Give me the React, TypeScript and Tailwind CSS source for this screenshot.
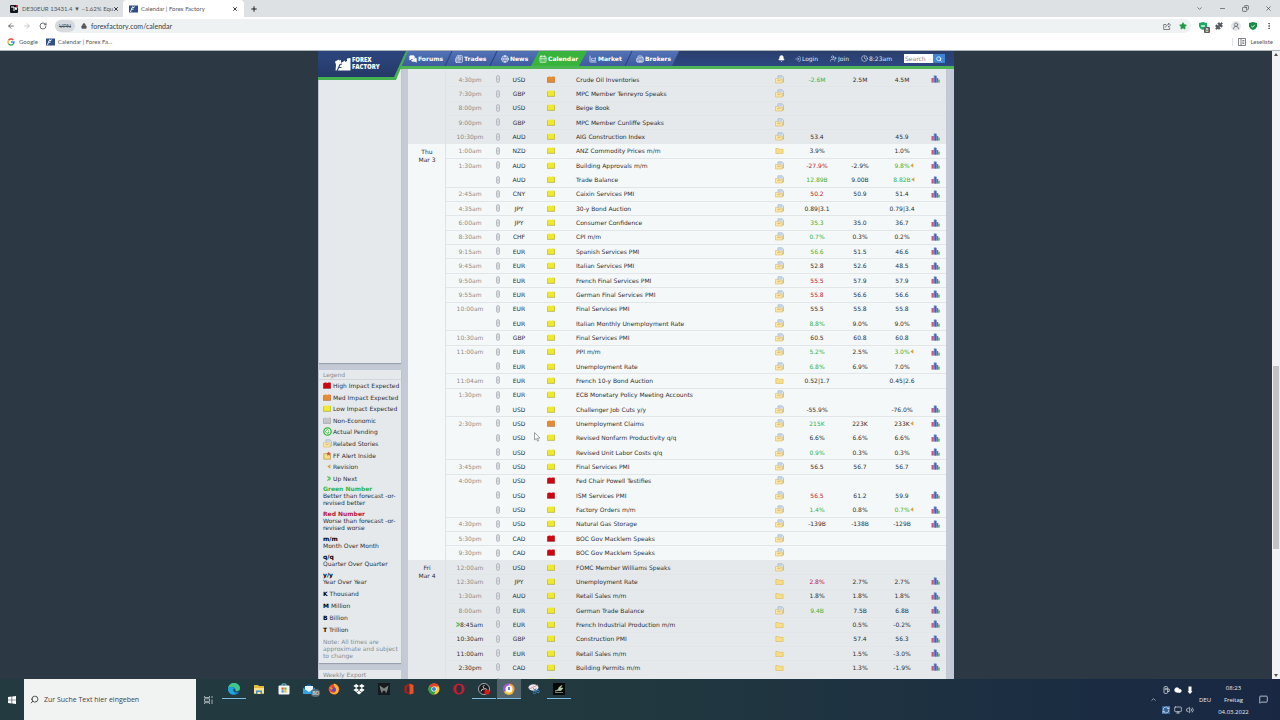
import React from "react";
import {
  ArrowLeft, ArrowRight, RotateCw, Lock, X, Plus, ChevronDown, ChevronUp, Minus, Copy, Share, Star,
  Puzzle, UserRound, MoreVertical, Search, Bell, LogIn, UserPlus, Clock, MessagesSquare,
  CalendarDays, Globe, Building2, ChartArea, Newspaper, Cloud, Volume2, MessageSquare,
  Monitor, RefreshCw,
} from "lucide-react";

type Tone = "g" | "r" | "";
type Row = {
  time: string;
  cur: string;
  imp: "y" | "o" | "r";
  name: string;
  stories?: boolean;
  actual?: string;
  tone?: Tone;
  forecast?: string;
  prev?: string;
  prevTone?: Tone;
  revised?: boolean;
  chart?: boolean;
  upcoming?: boolean;
};

const row = (
  time: string, cur: string, imp: Row["imp"], name: string,
  actual = "", tone: Tone = "", forecast = "", prev = "", extra: Partial<Row> = {},
): Row => ({ time, cur, imp, name, actual, tone, forecast, prev, stories: true, chart: prev !== "", ...extra });

const folderOnly = { stories: false };
const noChart = { chart: false };

const days: { label: string[]; light: boolean; rows: Row[] }[] = [
  {
    label: [],
    light: false,
    rows: [
      row("4:30pm", "USD", "o", "Crude Oil Inventories", "-2.6M", "g", "2.5M", "4.5M"),
      row("7:30pm", "GBP", "y", "MPC Member Tenreyro Speaks"),
      row("8:00pm", "USD", "y", "Beige Book"),
      row("9:00pm", "GBP", "y", "MPC Member Cunliffe Speaks"),
      row("10:30pm", "AUD", "y", "AIG Construction Index", "53.4", "", "", "45.9"),
    ],
  },
  {
    label: ["Thu", "Mar 3"],
    light: true,
    rows: [
      row("1:00am", "NZD", "y", "ANZ Commodity Prices m/m", "3.9%", "", "", "1.0%", folderOnly),
      row("1:30am", "AUD", "y", "Building Approvals m/m", "-27.9%", "r", "-2.9%", "9.8%", { prevTone: "g", revised: true }),
      row("", "AUD", "y", "Trade Balance", "12.89B", "g", "9.00B", "8.82B", { prevTone: "g", revised: true }),
      row("2:45am", "CNY", "y", "Caixin Services PMI", "50.2", "r", "50.9", "51.4"),
      row("4:35am", "JPY", "y", "30-y Bond Auction", "0.89|3.1", "", "", "0.79|3.4", noChart),
      row("6:00am", "JPY", "y", "Consumer Confidence", "35.3", "g", "35.0", "36.7"),
      row("8:30am", "CHF", "y", "CPI m/m", "0.7%", "g", "0.3%", "0.2%"),
      row("9:15am", "EUR", "y", "Spanish Services PMI", "56.6", "g", "51.5", "46.6"),
      row("9:45am", "EUR", "y", "Italian Services PMI", "52.8", "", "52.6", "48.5"),
      row("9:50am", "EUR", "y", "French Final Services PMI", "55.5", "r", "57.9", "57.9"),
      row("9:55am", "EUR", "y", "German Final Services PMI", "55.8", "r", "56.6", "56.6"),
      row("10:00am", "EUR", "y", "Final Services PMI", "55.5", "", "55.8", "55.8"),
      row("", "EUR", "y", "Italian Monthly Unemployment Rate", "8.8%", "g", "9.0%", "9.0%"),
      row("10:30am", "GBP", "y", "Final Services PMI", "60.5", "", "60.8", "60.8"),
      row("11:00am", "EUR", "y", "PPI m/m", "5.2%", "g", "2.5%", "3.0%", { prevTone: "g", revised: true }),
      row("", "EUR", "y", "Unemployment Rate", "6.8%", "g", "6.9%", "7.0%"),
      row("11:04am", "EUR", "y", "French 10-y Bond Auction", "0.52|1.7", "", "", "0.45|2.6", { stories: false, chart: false }),
      row("1:30pm", "EUR", "y", "ECB Monetary Policy Meeting Accounts"),
      row("", "USD", "y", "Challenger Job Cuts y/y", "-55.9%", "", "", "-76.0%"),
      row("2:30pm", "USD", "o", "Unemployment Claims", "215K", "g", "223K", "233K", { revised: true }),
      row("", "USD", "y", "Revised Nonfarm Productivity q/q", "6.6%", "", "6.6%", "6.6%"),
      row("", "USD", "y", "Revised Unit Labor Costs q/q", "0.9%", "g", "0.3%", "0.3%"),
      row("3:45pm", "USD", "y", "Final Services PMI", "56.5", "", "56.7", "56.7"),
      row("4:00pm", "USD", "r", "Fed Chair Powell Testifies"),
      row("", "USD", "r", "ISM Services PMI", "56.5", "r", "61.2", "59.9"),
      row("", "USD", "y", "Factory Orders m/m", "1.4%", "g", "0.8%", "0.7%", { prevTone: "g", revised: true }),
      row("4:30pm", "USD", "y", "Natural Gas Storage", "-139B", "", "-138B", "-129B"),
      row("5:30pm", "CAD", "r", "BOC Gov Macklem Speaks"),
      row("9:30pm", "CAD", "r", "BOC Gov Macklem Speaks"),
    ],
  },
  {
    label: ["Fri", "Mar 4"],
    light: false,
    rows: [
      row("12:00am", "USD", "y", "FOMC Member Williams Speaks"),
      row("12:30am", "JPY", "y", "Unemployment Rate", "2.8%", "r", "2.7%", "2.7%", folderOnly),
      row("1:30am", "AUD", "y", "Retail Sales m/m", "1.8%", "", "1.8%", "1.8%", folderOnly),
      row("8:00am", "EUR", "y", "German Trade Balance", "9.4B", "g", "7.5B", "6.8B"),
      row("8:45am", "EUR", "y", "French Industrial Production m/m", "", "", "0.5%", "-0.2%", { stories: false, upcoming: true }),
      row("10:30am", "GBP", "y", "Construction PMI", "", "", "57.4", "56.3", { stories: false, upcoming: true }),
      row("11:00am", "EUR", "y", "Retail Sales m/m", "", "", "1.5%", "-3.0%", { stories: false, upcoming: true }),
      row("2:30pm", "CAD", "y", "Building Permits m/m", "", "", "1.3%", "-1.9%", { stories: false, upcoming: true }),
      row("", "", "y", "", "", "", "", "", { stories: false, upcoming: true }),
    ],
  },
];

const toneClass = { g: "text-[#35b23c]", r: "text-[#b5203c]", "": "" };

const impactColors = {
  y: ["#f0e92c", "#b3a92a"],
  o: ["#e98a2e", "#b0622a"],
  r: ["#d2040f", "#8f0a12"],
  n: ["#c4c6ca", "#94979c"],
};

function Impact({ kind }: { kind: "y" | "o" | "r" | "n" }) {
  const [fill, edge] = impactColors[kind];
  return (
    <svg viewBox="0 0 8 7" className="block h-[7px] w-2">
      <path d="M.5 1.3 L2 .6 H3.3 L4 1.2 L5 .6 H7.5 V6 H.5Z" fill={fill} />
      <path d="M.3 1.3V6.4H7.7V1" fill="none" stroke={edge} strokeWidth=".7" />
    </svg>
  );
}

function Folder({ stories }: { stories?: boolean }) {
  return (
    <svg viewBox="0 0 9 9" className="mx-auto block size-[9px]">
      {stories && (
        <>
          <path d="M3 .8h4L8.600 2.300V7H3z" fill="#dbe6f0" stroke="#8ea4ba" strokeWidth=".6" />
          <path d="M4 2.200h3" stroke="#9bb0c6" strokeWidth=".5" />
        </>
      )}
      <path d={stories ? "M.5 3.400h2l.8.6h4v4H.5z" : "M.8 2.500h2.500l.8.8h4v4.200H.8z"} fill={stories ? "#fbe7a6" : "#f7df84"} stroke="#dcb75c" strokeWidth=".6" />
      {stories && <path d="M2.200 5.600h3.400" stroke="#cfa550" strokeWidth=".6" />}
    </svg>
  );
}

function ChartIcon() {
  return (
    <svg viewBox="0 0 9 8" className="mr-[6px] ml-auto block h-2 w-[9px]">
      <rect x=".5" y="3" width="2.3" height="4.6" fill="#c9577e" />
      <rect x="2.8" y=".5" width="2.6" height="7.1" fill="#5f7fcc" />
      <rect x="4.4" y="1.2" width="1" height="6.4" fill="#35549f" />
      <rect x="5.6" y="3" width="1.6" height="4.6" fill="#7a68ad" />
      <rect x="7.2" y="4.6" width="1.5" height="3" fill="#4fae62" />
    </svg>
  );
}

function FlagIcon() {
  return (
    <svg viewBox="0 0 9 8" className="block h-2 w-[9px]">
      <rect y=".5" width="9" height="7" fill="#2f4f87" />
      <path d="M1.5 7 3 2.500l1-.8v1.200l1.800-1.200M2.500 4.200h2" stroke="#fff" strokeWidth=".9" fill="none" />
    </svg>
  );
}

function RevisionMark() {
  return (
    <svg viewBox="0 0 4 5" className="block h-[5px] w-1">
      <path d="M.3 2.500 3.300.3v4.400z" fill="#d9a23c" />
    </svg>
  );
}

function NextMark() {
  return (
    <svg viewBox="0 0 4 5" className="block h-[5px] w-1">
      <path d="M.3.400 2.200 2.500.3 4.600M2 .400 3.600 2.500 2 4.600" fill="none" stroke="#35b23c" strokeWidth="1" />
    </svg>
  );
}

function LinkIcon() {
  return (
    <svg viewBox="0 0 4 8" className="mx-auto block h-2 w-1">
      <rect x=".5" y=".6" width="3" height="6.800" rx="1.500" fill="#e4e7ea" stroke="#a9aeb6" strokeWidth=".8" />
      <path d="M2 2.500v3" stroke="#a9aeb6" strokeWidth=".7" />
    </svg>
  );
}

function EventTable() {
  return (
    <table className="h-[617px] w-full table-fixed border-collapse text-center leading-[7px]">
      <colgroup>
        <col className="w-[38px]" />
        <col className="w-12" />
        <col className="w-[7px]" />
        <col className="w-9" />
        <col className="w-7" />
        <col />
        <col className="w-7" />
        <col className="w-12" />
        <col className="w-[38px]" />
        <col className="w-[46px]" />
        <col className="w-[21px]" />
      </colgroup>
      {days.map((day, d) => (
        <tbody key={d} className={day.light ? "bg-[#f5f8f9]" : "bg-[#e5e9ec]"}>
          {day.rows.map((r, i) => (
            <tr key={i} className={r.time && i > 0 ? "[&>td]:shadow-[inset_0_1px_0_#e3e6e9]" : ""}>
              {i === 0 && (
                <td rowSpan={day.rows.length} className="p-0 pt-1 align-top leading-2 shadow-[inset_-1px_0_0_#dfe3e7]">
                  {day.label.map((l) => <div key={l}>{l}</div>)}
                </td>
              )}
              <td className={r.upcoming ? "p-0" : "p-0 text-[#888c91]"}>
                {r.time === "8:45am"
                  ? <span className="flex items-center justify-center pr-px"><NextMark />{r.time}</span>
                  : r.time}
              </td>
              <td className="p-0"><LinkIcon /></td>
              <td className="p-0">{r.cur}</td>
              <td className="p-0 pl-[10px]"><Impact kind={r.imp} /></td>
              <td className="p-0 pl-[11px] text-left whitespace-nowrap">{r.name}</td>
              <td className="p-0"><Folder stories={r.stories} /></td>
              <td className={"p-0 " + toneClass[r.tone ?? ""]}>{r.actual}</td>
              <td className="p-0">{r.forecast}</td>
              <td className={"p-0 " + toneClass[r.prevTone ?? ""]}>
                {r.revised
                  ? <span className="flex items-center justify-center pl-1">{r.prev}<RevisionMark /></span>
                  : r.prev}
              </td>
              <td className="p-0">{r.chart && <ChartIcon />}</td>
            </tr>
          ))}
        </tbody>
      ))}
    </table>
  );
}

const legend: { icon: React.ReactNode; text: string }[] = [
  { icon: <Impact kind="r" />, text: "High Impact Expected" },
  { icon: <Impact kind="o" />, text: "Med Impact Expected" },
  { icon: <Impact kind="y" />, text: "Low Impact Expected" },
  { icon: <Impact kind="n" />, text: "Non-Economic" },
  {
    icon: (
      <svg viewBox="0 0 9 9" className="size-[9px]">
        <circle cx="4.5" cy="4.5" r="3.7" fill="#fff" stroke="#32b53b" strokeWidth="1.3" />
        <path d="M5.8 3.3A1.8 1.8 0 1 0 6.2 5H4.8" fill="none" stroke="#32b53b" strokeWidth=".9" />
      </svg>
    ),
    text: "Actual Pending",
  },
  { icon: <Folder stories />, text: "Related Stories" },
  {
    icon: (
      <svg viewBox="0 0 9 9" className="size-[9px]">
        <path d="M.8 2.6h2.5l.8.8h3.4v4.8H.8z" fill="#f7dc8c" stroke="#c9953a" strokeWidth=".7" />
        <path d="m5.6.4.8 1.4 1.7.2-1.2 1.2.3 1.6-1.6-.8-1.5.8.3-1.6L3.200 2l1.700-.2z" fill="#cf5c3c" />
      </svg>
    ),
    text: "FF Alert Inside",
  },
  { icon: <span className="pl-1"><RevisionMark /></span>, text: "Revision" },
  { icon: <span className="pl-1"><NextMark /></span>, text: "Up Next" },
];

function Sidebar() {
  return (
    <aside className="flex w-[82px] shrink-0 flex-col gap-[7px]">
      <div className="h-[294px] bg-[#e5e9ec] shadow-[0_1px_1px_#9aa1ae]" />
      <section className="bg-[#e5e9ec] px-1 pb-1 leading-[7px] shadow-[0_1px_1px_#9aa1ae]">
        <h2 className="-mx-1 border-b border-[#d3d7dc] px-1 py-px text-[#888c91]">Legend</h2>
        <ul className="grid h-[104px] grid-rows-9">
          {legend.map((l) => (
            <li key={l.text} className="flex items-center gap-px whitespace-nowrap">
              <span className="flex w-[9px] shrink-0">{l.icon}</span>
              {l.text}
            </li>
          ))}
        </ul>
        <dl className="mt-px flex flex-col gap-1 whitespace-nowrap">
          <div>
            <dt className="font-bold text-[#35b23c]">Green Number</dt>
            <dd>Better than forecast -or-<br />revised better</dd>
          </div>
          <div>
            <dt className="font-bold text-[#b5203c]">Red Number</dt>
            <dd>Worse than forecast -or-<br />revised worse</dd>
          </div>
          <div><dt className="font-bold text-black">m/m</dt><dd>Month Over Month</dd></div>
          <div><dt className="font-bold text-black">q/q</dt><dd>Quarter Over Quarter</dd></div>
          <div><dt className="font-bold text-black">y/y</dt><dd>Year Over Year</dd></div>
        </dl>
        <ul className="mt-[5px] flex flex-col gap-[5px]">
          <li><b className="text-black">K</b> Thousand</li>
          <li><b className="text-black">M</b> Million</li>
          <li><b className="text-black">B</b> Billion</li>
          <li><b className="text-black">T</b> Trillion</li>
        </ul>
        <p className="mt-[5px] whitespace-nowrap text-[#888c91]">
          Note: All times are<br />approximate and subject<br />to change
        </p>
      </section>
      <section className="h-5 bg-[#e5e9ec] px-1 py-px leading-2 text-[#888c91]">
        <h2>Weekly Export</h2>
      </section>
    </aside>
  );
}

function Divider() {
  return <span className="h-full w-px shrink-0 -skew-x-[25deg] bg-[#263f7c]" />;
}

const navLink = "flex h-full items-center gap-px whitespace-nowrap";

function SiteHeader() {
  return (
    <header className="relative z-10 flex h-[18px] items-start border-b-3 border-[#4cb556] bg-linear-to-b from-[#2a3f6b] to-[#2c4782] text-[6px] leading-2 text-[#dfe6f5]">
      <a
        href="#home"
        className="relative z-10 -mr-2 h-[29px] w-[90px] shrink-0 bg-[#45b050] [clip-path:polygon(0_0,100%_0,78px_100%,0_100%)]"
        aria-label="Forex Factory"
      >
        <span className="flex h-[26px] w-[88px] items-center gap-px bg-linear-to-b from-[#2c467e] to-[#243a68] pl-4 text-white [clip-path:polygon(0_0,100%_0,76px_100%,0_100%)]">
          <svg viewBox="0 0 17 15" className="h-[15px] w-[17px] shrink-0">
            <path d="M1 4.500 5 2.500l.5 1L7 3v3l4-2.500V5l2-1V1.500l3.500-.5v12.500H1.500L2 8z" fill="#fff" />
            <path d="M3 14 6 7.500 8 7M4.500 10.500h3" stroke="#2c467e" strokeWidth="1.200" fill="none" />
          </svg>
          <span className="flex flex-col font-['Open_Sans',sans-serif] text-[6px] font-extrabold">
            <span className="leading-[7px]">FOREX</span>
            <span className="leading-[7px]">FACTORY</span>
          </span>
        </span>
      </a>
      <nav className="flex h-full w-[279px] shrink-0 items-center bg-linear-to-b from-[#5272b8] to-[#3e5c9f] font-bold text-white [clip-path:polygon(0_0,100%_0,calc(100%-7px)_100%,0_100%)]">
        <a href="#forums" className={navLink + " w-[48px] pl-[9px]"}><MessagesSquare className="size-2 fill-white" />Forums</a>
        <Divider />
        <a href="#trades" className={navLink + " w-[44px] pl-[6px]"}><Newspaper className="size-2" />Trades</a>
        <Divider />
        <a href="#news" className={navLink + " w-[37px] pl-[7px]"}><Globe className="size-2" />News</a>
        <a href="#calendar" className={navLink + " w-[56px] bg-[#38b43c] pl-[8px] [clip-path:polygon(8px_0,100%_0,calc(100%-8px)_100%,0_100%)]"}>
          <CalendarDays className="size-2" />Calendar
        </a>
        <a href="#market" className={navLink + " w-[41px] pl-[2px]"}><ChartArea className="size-2" />Market</a>
        <Divider />
        <a href="#brokers" className={navLink + " pl-[7px]"}><Building2 className="size-2" />Brokers</a>
      </nav>
      <div className="ml-auto flex h-full shrink-0 items-center pr-[9px] whitespace-nowrap">
        <button aria-label="Alerts" className="mr-[10px]"><Bell className="size-[7px] fill-white text-white" /></button>
        <a href="#login" className="mr-3 flex items-center gap-px"><LogIn className="size-[6px]" />Login</a>
        <a href="#join" className="mr-3 flex items-center gap-px"><UserPlus className="size-[7px]" />Join</a>
        <span className="mr-3 flex items-center gap-px"><Clock className="size-[7px]" />8:23am</span>
        <input aria-label="Search site" placeholder="Search" className="h-[9px] w-[29px] bg-white px-px text-[6px] leading-2 placeholder:text-[#888]" />
        <button aria-label="Search" className="flex h-[9px] w-3 items-center justify-center bg-[#3d86d6] text-white"><Search className="size-[6px]" strokeWidth={3} /></button>
      </div>
    </header>
  );
}

function BrowserChrome() {
  return (
    <div className="shrink-0 border-b border-[#aeb4bb] bg-white font-[Lato,sans-serif] text-[6px] leading-2 text-[#54585d]">
      <div className="flex h-[17px] items-center bg-[#dde1e4]">
        <div className="flex w-[123px] items-center pr-1 pl-[10px]">
          <svg viewBox="0 0 8 8" className="mr-1 size-2 shrink-0">
            <rect width="8" height="8" rx="1" fill="#15171c" />
            <path d="M1 2h3v4M5 2l1 3 1.200-3" stroke="#fff" fill="none" />
            <circle cx="7" cy="1" r="1" fill="#ef304f" />
          </svg>
          <span className="whitespace-nowrap">DE30EUR 13431.4 ▼ −1.62% Equ</span>
          <button aria-label="Close first tab" className="ml-auto"><X className="size-[6px] text-black" strokeWidth={3} /></button>
        </div>
        <div className="flex h-full w-[121px] items-center rounded-t-[4px] bg-white px-[6px]">
          <FlagIcon />
          <span className="ml-[3px] whitespace-nowrap">Calendar | Forex Factory</span>
          <button aria-label="Close second tab" className="ml-auto"><X className="size-[6px] text-black" strokeWidth={3} /></button>
        </div>
        <button aria-label="New tab" className="ml-[6px]"><Plus className="size-2 text-black" strokeWidth={2.5} /></button>
        <div className="ml-auto flex items-center gap-4 pr-2 text-[#333]">
          <button aria-label="Tab search"><ChevronDown className="size-[7px]" /></button>
          <button aria-label="Minimise"><Minus className="size-[7px]" /></button>
          <button aria-label="Restore"><Copy className="size-[7px] -scale-x-100" /></button>
          <button aria-label="Close window"><X className="size-[7px]" /></button>
        </div>
      </div>
      <div className="flex h-[18px] items-center">
        <button aria-label="Back" className="ml-[7px]"><ArrowLeft className="size-2" strokeWidth={2.5} /></button>
        <button aria-label="Forward" className="ml-2"><ArrowRight className="size-2 text-[#b0b4b8]" /></button>
        <button aria-label="Reload" className="ml-2"><RotateCw className="size-2" strokeWidth={2.5} /></button>
        <div className="ml-2 flex h-[14px] flex-1 items-center rounded-full bg-[#eff2f3] pr-1">
          <span className="flex h-3 w-5 items-center justify-center rounded-full bg-[#d6dade] text-[6px] line-through">VPN</span>
          <Lock className="ml-[6px] size-[6px] fill-[#54585d]" />
          <input aria-label="Address" defaultValue="forexfactory.com/calendar" className="ml-1 flex-1 text-[7px] leading-[10px] text-[#3c4043]" />
          <button aria-label="Share page">
            <svg viewBox="0 0 8 8" className="size-2" fill="none" stroke="#70757a" strokeWidth=".9"><path d="M3 2.500H.7v5h6V5.500M2.500 5.500q.3-3 3-3V1L7.600 3.200 5.500 5.200V3.800" /></svg>
          </button>
          <button aria-label="Bookmark" className="ml-2"><Star className="size-2 fill-[#1d9b45] text-[#1d9b45]" /></button>
        </div>
        <div className="ml-2 flex items-center gap-2 pr-[7px]">
          <span className="relative">
            <svg viewBox="0 0 8 8" className="size-2"><path d="M4 0 8 1v3.500Q7 7 4 8 1 7 0 4.500V1z" fill="#1cab62" /><path d="M2 4h4" stroke="#d4f5df" strokeWidth="1.500" /></svg>
            <span className="absolute -right-[3px] -bottom-[3px] flex size-[6px] items-center justify-center rounded-[1px] bg-[#5a5e62] text-[5px] leading-none text-white">8</span>
          </span>
          <Puzzle className="size-2 fill-[#54585d]" />
          <span className="rounded-full bg-[#e4e7e9] p-px"><UserRound className="size-2" /></span>
          <svg viewBox="0 0 8 8" className="size-2"><path d="M4 0 8 1v3.500Q7 7 4 8 1 7 0 4.500V1z" fill="#158a43" /><path d="m2.300 4 1.200 1.200 2.300-2.400" stroke="#fff" fill="none" /></svg>
          <MoreVertical className="size-2" strokeWidth={3} />
        </div>
      </div>
      <div className="flex h-[15px] items-center pr-[7px] pb-px">
        <a href="#google" className="ml-[7px] flex items-center gap-1">
          <svg viewBox="0 0 8 8" className="size-2">
            <g fill="none" strokeWidth="1.400">
              <path d="M6.300 2A3 3 0 0 0 1.400 2.500" stroke="#ea4335" />
              <path d="M1.400 2.500A3 3 0 0 0 1.400 5.500" stroke="#fbbc05" />
              <path d="M1.400 5.500A3 3 0 0 0 6 6.200" stroke="#34a853" />
              <path d="M6 6.200A3 3 0 0 0 7 4H4" stroke="#4285f4" />
            </g>
          </svg>
          Google
        </a>
        <a href="#calendar" className="ml-2 flex items-center gap-[3px]"><FlagIcon />Calendar | Forex Fa...</a>
        <a href="#list" className="ml-auto flex items-center gap-1 border-l border-[#e2e5e7] pl-[5px]">
          <svg viewBox="0 0 8 8" className="size-2" fill="none" stroke="#5f6368" strokeWidth=".8"><rect x=".6" y=".6" width="6.800" height="6.800" /><path d="M3 .600v6.800M4.300 2.500h2M4.300 4h2M4.300 5.500h2" /></svg>
          Leseliste
        </a>
      </div>
    </div>
  );
}

function AppIcon({ children }: { children: React.ReactNode }) {
  return <svg viewBox="0 0 12 12" className="size-3">{children}</svg>;
}

const apps: { name: string; open?: boolean; active?: boolean; badge?: string; icon: React.ReactNode }[] = [
  {
    name: "Edge", open: true,
    icon: (
      <>
        <circle cx="6" cy="6" r="6" fill="#1a78c9" />
        <path d="M0 5.500C.5 2 3 0 6 0s6 2 6 5-4 4-5 3c1.500-2-.5-4-3-4S.5 5 0 5.500z" fill="#3ec98b" />
        <path d="M0 6c1-2 5-2.500 6-.5C4 6 4 9 8 10.500 4 13 0 10 0 6z" fill="#1fa7dd" />
        <path d="M5.800 6c-.5 2.500 2 4 5 3L12 7q-2 2-4.500 1.200Q7.600 6 5.800 6z" fill="#223a40" />
      </>
    ),
  },
  {
    name: "Explorer",
    icon: <><path d="M1 2h4l1 1h5v8H1z" fill="#e7b93c" /><path d="M1 5h10v5H1z" fill="#ffe08a" /><path d="M3 7.500h6V11H3z" fill="#3d8ed0" /><path d="M4.500 9h3v2h-3z" fill="#ffe08a" /></>,
  },
  {
    name: "Store",
    icon: <><path d="M4 3V1h4v2" stroke="#75c3ec" fill="none" /><rect x=".5" y="2.500" width="11" height="9" rx="1" fill="#f4f6f7" /><path d="M3.500 4.500h2.200v2.200H3.500z" fill="#e84e2c" /><path d="M6.300 4.500h2.200v2.200H6.300z" fill="#72b82b" /><path d="M3.500 7.300h2.200v2.200H3.500z" fill="#2da0e0" /><path d="M6.300 7.300h2.200v2.200H6.300z" fill="#f3b41c" /></>,
  },
  {
    name: "Mail", badge: "80",
    icon: <><path d="M0 5l6-4 6 4v6H0z" fill="#1769ad" /><path d="M2 3h8v4l-4 3-4-3z" fill="#e9f5fb" /><path d="m0 5 6 4 6-4v6H0z" fill="#31a5e4" /></>,
  },
  {
    name: "Firefox",
    icon: <><circle cx="6" cy="6.300" r="5.300" fill="#f4492e" /><path d="M6 .5c4 1 6 5 4 9-2 3-7 2-8-1C5 11 9 9 8 6 7 4 5 3 6 .5z" fill="#ffb52c" /><circle cx="5.500" cy="6.500" r="2.300" fill="#5c46c7" /><path d="M1 4q3 0 4 1.500L3.500 7z" fill="#ff8a24" /></>,
  },
  {
    name: "Dropbox",
    icon: <path d="m3.200 1 2.800 2-2.800 2L.4 3zm5.600 0 2.800 2-2.800 2L6 3zM3.200 5 6 7 3.200 9 .4 7zm5.600 0 2.800 2-2.800 2L6 7zM6 7.700l2.700 1.900L6 11.500 3.300 9.600z" fill="#fff" />,
  },
  {
    name: "Predator",
    icon: <><rect width="12" height="12" fill="#171a1c" /><path d="M1.500 2.500 5.500 5 6 6l.5-1 4-2.500L9.500 7 8 10.500 7 7.500 6 8 5 7.500 4 10.500 2.500 7z" fill="#7b8484" /></>,
  },
  {
    name: "Office",
    icon: <><path d="m1.500 3 5-2.500V3L4 4v5l2.500.5v2L1.500 9.500z" fill="#a72115" /><path d="m6.500.5 4 1.500v8.500l-4 1z" fill="#e8512a" /></>,
  },
  {
    name: "Chrome",
    icon: <><circle cx="6" cy="6" r="5.500" fill="#f6c828" /><path d="M6 6 1.200 3.200A5.500 5.500 0 0 1 11 3.500H6z" fill="#e6402f" /><path d="M6 6 1.200 3.200A5.500 5.500 0 0 0 6 11.500L8.200 7z" fill="#2ea24d" /><circle cx="6" cy="6" r="2.600" fill="#fff" /><circle cx="6" cy="6" r="2" fill="#3b7de9" /></>,
  },
  {
    name: "Opera",
    icon: <><circle cx="6" cy="6" r="5.600" fill="#c41e31" /><ellipse cx="6" cy="6" rx="2.600" ry="3.900" fill="#243338" /></>,
  },
  {
    name: "OBS", open: true,
    icon: <><circle cx="6" cy="6" r="5.500" fill="#17191b" stroke="#c8cccf" strokeWidth=".8" /><path d="M6 5.500Q4 3 6.500 2M6 6q-3 0-3 2.500M6 6q3-1 3 1" stroke="#c8cccf" strokeWidth="1" fill="none" /><circle cx="9" cy="9" r="2.600" fill="#e01717" /></>,
  },
  {
    name: "Avast browser", open: true, active: true,
    icon: <><circle cx="6" cy="6" r="5.600" fill="#f4a22c" /><path d="M6 .4A5.600 5.600 0 0 0 1 9L6 6z" fill="#9a58d8" /><path d="M1 9a5.600 5.600 0 0 0 9 1L6 6z" fill="#f0c63a" /><circle cx="6" cy="6" r="3.500" fill="#fff" /><path d="M6 4v3" stroke="#464da1" strokeWidth="1.500" /></>,
  },
  {
    name: "Snipping tool",
    icon: <><ellipse cx="5.500" cy="4.500" rx="5" ry="3.300" fill="#e9e5e8" /><path d="m1 6 9-4" stroke="#d88a8a" strokeWidth=".8" /><circle cx="6.500" cy="9.500" r="1.300" fill="none" stroke="#397dc0" /><circle cx="10" cy="8.500" r="1.300" fill="none" stroke="#397dc0" /><path d="m5 5.500 4 2.500M8 5.500 7 8.500" stroke="#397dc0" strokeWidth=".9" /></>,
  },
  {
    name: "Game", open: true,
    icon: <><rect width="12" height="12" fill="#050706" /><path d="M2 8Q5 8 6 4.500q1-1.500 3-2L7 5h3L8 7.500H5.500zM2 9.500h8" fill="#b6ccae" stroke="#b6ccae" strokeWidth=".6" /></>,
  },
];

function Taskbar() {
  return (
    <footer className="flex h-[41px] shrink-0 bg-linear-to-r from-[#223a40] via-[#21383f] to-[#192743] font-['Open_Sans','Noto_Sans',sans-serif] text-[6px] leading-3 text-[#e7ebef]">
      <button aria-label="Start" className="flex w-6 items-center justify-center">
        <svg viewBox="0 0 8 8" className="size-2"><path d="M0 1l3.600-.5v3.200H0zM4.200.4 8 0v3.700H4.200zM0 4.300h3.600v3.200L0 7zM4.200 4.300H8V8l-3.800-.5z" fill="#fff" /></svg>
      </button>
      <label className="flex w-[172px] items-center gap-[5px] bg-[#f1f2f2] pl-[6px]">
        <Search className="size-[9px] -scale-x-100 text-[#222]" />
        <input aria-label="Windows search" placeholder="Zur Suche Text hier eingeben" className="min-w-0 flex-1 text-[7px] leading-3 placeholder:text-[#444]" />
      </label>
      <button aria-label="Task view" className="flex w-6 items-center justify-center">
        <svg viewBox="0 0 9 8" className="h-2 w-[9px]" fill="none" stroke="#c2cbd0" strokeWidth=".8"><path d="M.5 0v1.500h5V0M.5 2.800h5v2.600h-5zM.5 8V6.700h5V8M8 0v2M8 3.500V8" /></svg>
      </button>
      <div className="flex gap-px pl-[2px]">
        {apps.map((a) => (
          <button
            key={a.name}
            aria-label={a.name}
            className={
              "relative flex h-5 w-6 items-center justify-center border-b " +
              (a.active ? "bg-[#53636c] " : "") + (a.open ? "border-[#7dbbe0]" : "border-transparent")
            }
          >
            <AppIcon>{a.icon}</AppIcon>
            {a.badge && <span className="absolute right-px bottom-px flex h-2 items-center rounded-full bg-[#5c6a74] px-px text-[6px] text-white">{a.badge}</span>}
          </button>
        ))}
      </div>
      <div className="ml-auto flex items-center">
        <ChevronUp className="mr-[5px] size-[7px]" />
        <div className="mr-[5px] grid grid-cols-3 gap-x-1 gap-y-3">
          <svg viewBox="0 0 8 8" className="size-2" fill="none" stroke="#d5dbe1" strokeWidth=".8"><rect x="2" y=".6" width="3.600" height="6.800" rx="1" /><circle cx="3.800" cy="3" r=".8" /><path d="M5.600 3h1.600v2.500H5.600" /></svg>
          <Cloud className="size-2 fill-white text-white" />
          <svg viewBox="0 0 8 8" className="size-2"><path d="M2.500.5h3v4.700h-3zM1.500 5.200h5L4 8z" fill="#fff" /></svg>
          <RefreshCw className="size-2 bg-[#31659a]" />
          <Monitor className="size-2" />
          <Volume2 className="size-2" />
        </div>
        <span className="w-[13px]">DEU</span>
        <div className="ml-[6px] w-[31px] text-center whitespace-nowrap">08:23<br />Freitag<br />04.03.2022</div>
        <MessageSquare className="mr-3 ml-[10px] size-[9px]" />
      </div>
    </footer>
  );
}

export default function App() {
  return (
    <div className="flex h-screen flex-col overflow-hidden">
      <BrowserChrome />
      <div className="flex min-h-0 flex-1 bg-[#2d3845]">
        <main className="relative min-w-0 flex-1 overflow-hidden">
          <div className="mx-auto w-[636px] bg-[#c4cad5] font-['DejaVu_Sans',sans-serif] text-[6px] text-[#2d3034]">
            <SiteHeader />
            <div className="flex gap-[7px] pr-2 pl-px">
              <Sidebar />
              <div className="min-w-0 flex-1 bg-[#e5e9ec] pt-[3px]">
                <EventTable />
              </div>
            </div>
          </div>
          <svg viewBox="0 0 7 10" className="absolute top-[381px] left-[534px] h-[10px] w-[7px]">
            <path d="M.5.500v7.500l1.800-1.500 1.200 2.700 1.200-.5-1.200-2.600h2.400z" fill="#fff" stroke="#666" strokeWidth=".6" />
          </svg>
        </main>
        <div className="flex w-2 flex-col items-center bg-[#f1f2f3] py-[2px]">
          <span className="border-x-2 border-b-[3px] border-x-transparent border-b-[#505050]" />
          <span className="mt-[310px] h-[183px] w-[6px] bg-[#c1c3c4]" />
          <span className="mt-auto border-x-2 border-t-[3px] border-x-transparent border-t-[#505050]" />
        </div>
      </div>
      <Taskbar />
    </div>
  );
}
